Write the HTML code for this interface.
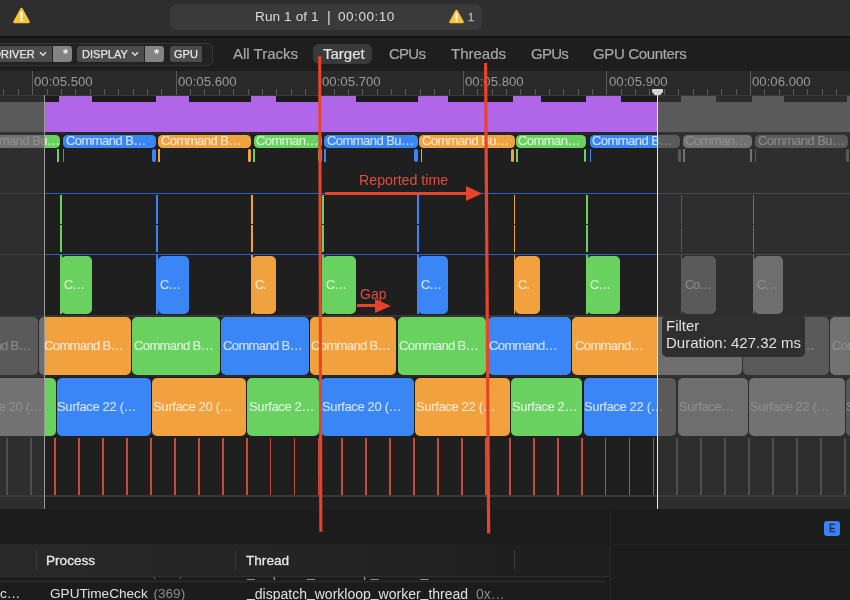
<!DOCTYPE html><html><head><meta charset="utf-8"><style>
*{margin:0;padding:0;box-sizing:border-box}
html,body{width:850px;height:600px;overflow:hidden;background:#1c1c1c;font-family:"Liberation Sans",sans-serif}
div,span,svg{position:absolute}
span{position:static}
.t{white-space:pre;line-height:1;will-change:transform}
.blk{overflow:hidden}
.blk .t{color:rgba(255,255,255,0.72);-webkit-text-stroke:0.2px rgba(255,255,255,0.5)}
</style></head><body><div style="left:0px;top:0px;width:850.00px;height:36.00px;background:#2e2e2e;"></div>
<div style="left:0px;top:36px;width:850.00px;height:2.00px;background:#121212;"></div>
<svg style="left:13px;top:7px" width="17" height="17" viewBox="0 0 16 16"><path d="M8 2 L14.6 14 L1.4 14Z" fill="#f4c43b" stroke="#f4c43b" stroke-width="2.4" stroke-linejoin="round"/><path d="M8 5.2 L8 9.8" stroke="#fff" stroke-width="2.1" stroke-linecap="round"/><circle cx="8" cy="12.4" r="1.15" fill="#fff"/></svg>
<div style="left:170px;top:3.5px;width:312px;height:26px;background:#3a3a3a;border-radius:7px"></div>
<div class="t" style="left:255px;top:10.29px;font-size:13.6px;color:#dcdcdc;letter-spacing:0.1px;">Run 1 of 1</div>
<div class="t" style="left:326.8px;top:10.03px;font-size:14.5px;color:#dcdcdc;letter-spacing:0px;">|</div>
<div class="t" style="left:338px;top:10.29px;font-size:13.6px;color:#dcdcdc;letter-spacing:0.5px;">00:00:10</div>
<svg style="left:448.5px;top:8.5px" width="15" height="15" viewBox="0 0 16 16"><path d="M8 2 L14.6 14 L1.4 14Z" fill="#f4c43b" stroke="#f4c43b" stroke-width="2.4" stroke-linejoin="round"/><path d="M8 5.2 L8 9.8" stroke="#fff" stroke-width="2.1" stroke-linecap="round"/><circle cx="8" cy="12.4" r="1.15" fill="#fff"/></svg>
<div class="t" style="left:467.5px;top:12.19px;font-size:11px;color:#b4b4b4;letter-spacing:0px;-webkit-text-stroke:0.3px #b4b4b4">1</div>
<div style="left:0px;top:38px;width:850.00px;height:33.00px;background:#1e1e1e;"></div>
<div style="left:-20px;top:42.8px;width:233px;height:23px;border:1.2px solid #373737;border-radius:6px;background:#222"></div>
<div style="left:-10px;top:46px;width:62px;height:16px;background:#4c4c4c;border-radius:0 0 0 0"></div>
<div class="t" style="left:-7.5px;top:48.69px;font-size:11px;color:#e6e6e6;letter-spacing:0.05px;-webkit-text-stroke:0.25px #e6e6e6">DRIVER</div>
<svg style="left:39px;top:51px" width="8" height="6" viewBox="0 0 8 6"><path d="M1 1.2 L4 4.2 L7 1.2" stroke="#e0e0e0" stroke-width="1.5" fill="none"/></svg>
<div style="left:53px;top:46px;width:19px;height:16px;background:#838383;border-radius:0 3px 3px 0"></div>
<div class="t" style="left:63.0px;top:47.30px;font-size:13px;color:#f4f4f4;letter-spacing:0px;font-weight:bold">*</div>
<div style="left:77px;top:46px;width:67px;height:16px;background:#4c4c4c;border-radius:3px 0 0 3px"></div>
<div class="t" style="left:81.5px;top:48.69px;font-size:11px;color:#e6e6e6;letter-spacing:0.05px;-webkit-text-stroke:0.25px #e6e6e6">DISPLAY</div>
<svg style="left:131px;top:51px" width="8" height="6" viewBox="0 0 8 6"><path d="M1 1.2 L4 4.2 L7 1.2" stroke="#e0e0e0" stroke-width="1.5" fill="none"/></svg>
<div style="left:145px;top:46px;width:19px;height:16px;background:#838383;border-radius:0 3px 3px 0"></div>
<div class="t" style="left:154.0px;top:47.30px;font-size:13px;color:#f4f4f4;letter-spacing:0px;font-weight:bold">*</div>
<div style="left:170px;top:46px;width:32px;height:16px;background:#4c4c4c;border-radius:3px 0 0 3px"></div>
<div class="t" style="left:173.5px;top:48.69px;font-size:11px;color:#e6e6e6;letter-spacing:0.05px;-webkit-text-stroke:0.25px #e6e6e6">GPU</div>
<div style="left:313px;top:44px;width:59px;height:20px;background:#3a3a3a;border-radius:6px"></div>
<div class="t" style="left:232.6px;top:46.00px;font-size:15px;color:#a8a8a8;letter-spacing:0px;-webkit-text-stroke:0.2px #a8a8a8">All Tracks</div>
<div class="t" style="left:322.6px;top:46.00px;font-size:15px;color:#e2e2e2;letter-spacing:0px;-webkit-text-stroke:0.2px #e2e2e2">Target</div>
<div class="t" style="left:388.6px;top:46.00px;font-size:15px;color:#a8a8a8;letter-spacing:-0.75px;-webkit-text-stroke:0.2px #a8a8a8">CPUs</div>
<div class="t" style="left:450.6px;top:46.00px;font-size:15px;color:#a8a8a8;letter-spacing:0px;-webkit-text-stroke:0.2px #a8a8a8">Threads</div>
<div class="t" style="left:530.6px;top:46.00px;font-size:15px;color:#a8a8a8;letter-spacing:-0.75px;-webkit-text-stroke:0.2px #a8a8a8">GPUs</div>
<div class="t" style="left:592.6px;top:46.00px;font-size:15px;color:#a8a8a8;letter-spacing:-0.35px;-webkit-text-stroke:0.2px #a8a8a8">GPU Counters</div>
<div style="left:0px;top:71px;width:850.00px;height:24.00px;background:#2a2a2a;"></div>
<div style="left:0px;top:95px;width:850.00px;height:1.00px;background:#3a3a3a;"></div>
<div style="left:3.49px;top:89px;width:1.00px;height:6.00px;background:#5a5a5a;"></div>
<div style="left:17.85px;top:89px;width:1.00px;height:6.00px;background:#5a5a5a;"></div>
<div style="left:32.2px;top:71px;width:1.00px;height:24.00px;background:#5a5a5a;"></div>
<div style="left:46.56px;top:89px;width:1.00px;height:6.00px;background:#5a5a5a;"></div>
<div style="left:60.91px;top:89px;width:1.00px;height:6.00px;background:#5a5a5a;"></div>
<div style="left:75.27px;top:89px;width:1.00px;height:6.00px;background:#5a5a5a;"></div>
<div style="left:89.62px;top:89px;width:1.00px;height:6.00px;background:#5a5a5a;"></div>
<div style="left:103.98px;top:89px;width:1.00px;height:6.00px;background:#5a5a5a;"></div>
<div style="left:118.33px;top:89px;width:1.00px;height:6.00px;background:#5a5a5a;"></div>
<div style="left:132.69px;top:89px;width:1.00px;height:6.00px;background:#5a5a5a;"></div>
<div style="left:147.04px;top:89px;width:1.00px;height:6.00px;background:#5a5a5a;"></div>
<div style="left:161.39px;top:89px;width:1.00px;height:6.00px;background:#5a5a5a;"></div>
<div style="left:175.75px;top:71px;width:1.00px;height:24.00px;background:#5a5a5a;"></div>
<div style="left:190.11px;top:89px;width:1.00px;height:6.00px;background:#5a5a5a;"></div>
<div style="left:204.46px;top:89px;width:1.00px;height:6.00px;background:#5a5a5a;"></div>
<div style="left:218.81px;top:89px;width:1.00px;height:6.00px;background:#5a5a5a;"></div>
<div style="left:233.17px;top:89px;width:1.00px;height:6.00px;background:#5a5a5a;"></div>
<div style="left:247.52px;top:89px;width:1.00px;height:6.00px;background:#5a5a5a;"></div>
<div style="left:261.88px;top:89px;width:1.00px;height:6.00px;background:#5a5a5a;"></div>
<div style="left:276.24px;top:89px;width:1.00px;height:6.00px;background:#5a5a5a;"></div>
<div style="left:290.59px;top:89px;width:1.00px;height:6.00px;background:#5a5a5a;"></div>
<div style="left:304.94px;top:89px;width:1.00px;height:6.00px;background:#5a5a5a;"></div>
<div style="left:319.3px;top:71px;width:1.00px;height:24.00px;background:#5a5a5a;"></div>
<div style="left:333.66px;top:89px;width:1.00px;height:6.00px;background:#5a5a5a;"></div>
<div style="left:348.01px;top:89px;width:1.00px;height:6.00px;background:#5a5a5a;"></div>
<div style="left:362.37px;top:89px;width:1.00px;height:6.00px;background:#5a5a5a;"></div>
<div style="left:376.72px;top:89px;width:1.00px;height:6.00px;background:#5a5a5a;"></div>
<div style="left:391.08px;top:89px;width:1.00px;height:6.00px;background:#5a5a5a;"></div>
<div style="left:405.43px;top:89px;width:1.00px;height:6.00px;background:#5a5a5a;"></div>
<div style="left:419.79px;top:89px;width:1.00px;height:6.00px;background:#5a5a5a;"></div>
<div style="left:434.14px;top:89px;width:1.00px;height:6.00px;background:#5a5a5a;"></div>
<div style="left:448.5px;top:89px;width:1.00px;height:6.00px;background:#5a5a5a;"></div>
<div style="left:462.85px;top:71px;width:1.00px;height:24.00px;background:#5a5a5a;"></div>
<div style="left:477.2px;top:89px;width:1.00px;height:6.00px;background:#5a5a5a;"></div>
<div style="left:491.56px;top:89px;width:1.00px;height:6.00px;background:#5a5a5a;"></div>
<div style="left:505.92px;top:89px;width:1.00px;height:6.00px;background:#5a5a5a;"></div>
<div style="left:520.27px;top:89px;width:1.00px;height:6.00px;background:#5a5a5a;"></div>
<div style="left:534.62px;top:89px;width:1.00px;height:6.00px;background:#5a5a5a;"></div>
<div style="left:548.98px;top:89px;width:1.00px;height:6.00px;background:#5a5a5a;"></div>
<div style="left:563.34px;top:89px;width:1.00px;height:6.00px;background:#5a5a5a;"></div>
<div style="left:577.69px;top:89px;width:1.00px;height:6.00px;background:#5a5a5a;"></div>
<div style="left:592.05px;top:89px;width:1.00px;height:6.00px;background:#5a5a5a;"></div>
<div style="left:606.4px;top:71px;width:1.00px;height:24.00px;background:#5a5a5a;"></div>
<div style="left:620.76px;top:89px;width:1.00px;height:6.00px;background:#5a5a5a;"></div>
<div style="left:635.11px;top:89px;width:1.00px;height:6.00px;background:#5a5a5a;"></div>
<div style="left:649.47px;top:89px;width:1.00px;height:6.00px;background:#5a5a5a;"></div>
<div style="left:663.82px;top:89px;width:1.00px;height:6.00px;background:#5a5a5a;"></div>
<div style="left:678.18px;top:89px;width:1.00px;height:6.00px;background:#5a5a5a;"></div>
<div style="left:692.53px;top:89px;width:1.00px;height:6.00px;background:#5a5a5a;"></div>
<div style="left:706.89px;top:89px;width:1.00px;height:6.00px;background:#5a5a5a;"></div>
<div style="left:721.24px;top:89px;width:1.00px;height:6.00px;background:#5a5a5a;"></div>
<div style="left:735.6px;top:89px;width:1.00px;height:6.00px;background:#5a5a5a;"></div>
<div style="left:749.95px;top:71px;width:1.00px;height:24.00px;background:#5a5a5a;"></div>
<div style="left:764.31px;top:89px;width:1.00px;height:6.00px;background:#5a5a5a;"></div>
<div style="left:778.66px;top:89px;width:1.00px;height:6.00px;background:#5a5a5a;"></div>
<div style="left:793.02px;top:89px;width:1.00px;height:6.00px;background:#5a5a5a;"></div>
<div style="left:807.37px;top:89px;width:1.00px;height:6.00px;background:#5a5a5a;"></div>
<div style="left:821.73px;top:89px;width:1.00px;height:6.00px;background:#5a5a5a;"></div>
<div style="left:836.08px;top:89px;width:1.00px;height:6.00px;background:#5a5a5a;"></div>
<div class="t" style="left:34.4px;top:75.13px;font-size:13.2px;color:#9a9a9a;letter-spacing:0px;">00:05.500</div>
<div class="t" style="left:177.95px;top:75.13px;font-size:13.2px;color:#9a9a9a;letter-spacing:0px;">00:05.600</div>
<div class="t" style="left:321.5px;top:75.13px;font-size:13.2px;color:#9a9a9a;letter-spacing:0px;">00:05.700</div>
<div class="t" style="left:465.05px;top:75.13px;font-size:13.2px;color:#9a9a9a;letter-spacing:0px;">00:05.800</div>
<div class="t" style="left:608.6px;top:75.13px;font-size:13.2px;color:#9a9a9a;letter-spacing:0px;">00:05.900</div>
<div class="t" style="left:752.15px;top:75.13px;font-size:13.2px;color:#9a9a9a;letter-spacing:0px;">00:06.000</div>
<div style="left:0px;top:96px;width:850.00px;height:413.00px;background:#1f1f1f;"></div>
<div style="left:0px;top:96px;width:850.00px;height:36.00px;background:#b165e9;"></div>
<div style="left:0px;top:96px;width:59.40px;height:6.00px;background:#1b1b1b;"></div>
<div style="left:91.8px;top:96px;width:64.00px;height:6.00px;background:#1b1b1b;"></div>
<div style="left:189.3px;top:96px;width:61.70px;height:6.00px;background:#1b1b1b;"></div>
<div style="left:276px;top:96px;width:45.00px;height:6.00px;background:#1b1b1b;"></div>
<div style="left:355.8px;top:96px;width:62.20px;height:6.00px;background:#1b1b1b;"></div>
<div style="left:447.8px;top:96px;width:65.20px;height:6.00px;background:#1b1b1b;"></div>
<div style="left:540.6px;top:96px;width:45.10px;height:6.00px;background:#1b1b1b;"></div>
<div style="left:620.6px;top:96px;width:60.10px;height:6.00px;background:#1b1b1b;"></div>
<div style="left:716px;top:96px;width:36.00px;height:6.00px;background:#1b1b1b;"></div>
<div style="left:783.6px;top:96px;width:63.60px;height:6.00px;background:#1b1b1b;"></div>
<div style="left:0px;top:132px;width:850.00px;height:2.50px;background:#262626;"></div>
<div class="blk" style="left:-30px;top:134.5px;width:89.50px;height:13.3px;background:#68d160;border-radius:4.5px">
<div class="t" style="left:2.5px;top:-0.70px;font-size:13px;color:;letter-spacing:-0.55px;">Command Bu…</div>
</div>
<div class="blk" style="left:63.2px;top:134.5px;width:93.10px;height:13.3px;background:#3a86f6;border-radius:4.5px">
<div class="t" style="left:2.5px;top:-0.70px;font-size:13px;color:;letter-spacing:-0.55px;">Command B…</div>
</div>
<div class="blk" style="left:158.3px;top:134.5px;width:93.10px;height:13.3px;background:#f1a13d;border-radius:4.5px">
<div class="t" style="left:2.5px;top:-0.70px;font-size:13px;color:;letter-spacing:-0.55px;">Command B…</div>
</div>
<div class="blk" style="left:253.5px;top:134.5px;width:68.50px;height:13.3px;background:#68d160;border-radius:4.5px">
<div class="t" style="left:2.5px;top:-0.70px;font-size:13px;color:;letter-spacing:-0.55px;">Comman…</div>
</div>
<div class="blk" style="left:324px;top:134.5px;width:93.50px;height:13.3px;background:#3a86f6;border-radius:4.5px">
<div class="t" style="left:2.5px;top:-0.70px;font-size:13px;color:;letter-spacing:-0.55px;">Command Bu…</div>
</div>
<div class="blk" style="left:419px;top:134.5px;width:95.50px;height:13.3px;background:#f1a13d;border-radius:4.5px">
<div class="t" style="left:2.5px;top:-0.70px;font-size:13px;color:;letter-spacing:-0.55px;">Command Bu…</div>
</div>
<div class="blk" style="left:515.8px;top:134.5px;width:70.70px;height:13.3px;background:#68d160;border-radius:4.5px">
<div class="t" style="left:2.5px;top:-0.70px;font-size:13px;color:;letter-spacing:-0.55px;">Comman…</div>
</div>
<div class="blk" style="left:589.8px;top:134.5px;width:90.20px;height:13.3px;background:#3a86f6;border-radius:4.5px">
<div class="t" style="left:2.5px;top:-0.70px;font-size:13px;color:;letter-spacing:-0.55px;">Command B…</div>
</div>
<div class="blk" style="left:682.6px;top:134.5px;width:69.20px;height:13.3px;background:#68d160;border-radius:4.5px">
<div class="t" style="left:2.5px;top:-0.70px;font-size:13px;color:;letter-spacing:-0.55px;">Comman…</div>
</div>
<div class="blk" style="left:755px;top:134.5px;width:93.00px;height:13.3px;background:#3a86f6;border-radius:4.5px">
<div class="t" style="left:2.5px;top:-0.70px;font-size:13px;color:;letter-spacing:-0.55px;">Command Bu…</div>
</div>
<div style="left:57px;top:149px;width:2.00px;height:13.00px;background:#68d160;"></div>
<div style="left:63px;top:149px;width:1.00px;height:13.00px;background:#3a86f6;"></div>
<div style="left:151.5px;top:149px;width:4.50px;height:13.00px;background:#3a86f6;border-radius:2px"></div>
<div style="left:158.1px;top:149px;width:1.80px;height:13.00px;background:#f1a13d;"></div>
<div style="left:247.8px;top:149px;width:3.70px;height:13.00px;background:#f1a13d;border-radius:2px"></div>
<div style="left:253.3px;top:149px;width:1.80px;height:13.00px;background:#68d160;"></div>
<div style="left:318px;top:149px;width:4.00px;height:13.00px;background:#68d160;border-radius:2px"></div>
<div style="left:324.3px;top:149px;width:1.80px;height:13.00px;background:#3a86f6;"></div>
<div style="left:414.3px;top:149px;width:3.30px;height:13.00px;background:#3a86f6;border-radius:2px"></div>
<div style="left:420.5px;top:149px;width:1.80px;height:13.00px;background:#f1a13d;"></div>
<div style="left:511px;top:149px;width:3.00px;height:13.00px;background:#f1a13d;border-radius:2px"></div>
<div style="left:515.8px;top:149px;width:1.80px;height:13.00px;background:#68d160;"></div>
<div style="left:583.8px;top:149px;width:2.70px;height:13.00px;background:#68d160;border-radius:2px"></div>
<div style="left:589.5px;top:149px;width:1.80px;height:13.00px;background:#3a86f6;"></div>
<div style="left:678px;top:149px;width:3.00px;height:13.00px;background:#3a86f6;border-radius:2px"></div>
<div style="left:683.3px;top:149px;width:1.80px;height:13.00px;background:#68d160;"></div>
<div style="left:750.3px;top:149px;width:1.80px;height:13.00px;background:#68d160;"></div>
<div style="left:754.7px;top:149px;width:1.80px;height:13.00px;background:#3a86f6;"></div>
<div style="left:846px;top:149px;width:3.00px;height:13.00px;background:#3a86f6;border-radius:2px"></div>
<div style="left:45px;top:193px;width:805.00px;height:1.30px;background:#2b5fc2;"></div>
<div style="left:0px;top:193px;width:45.00px;height:1.00px;background:#4a4a4a;"></div>
<div style="left:45px;top:254px;width:805.00px;height:1.30px;background:#2b5fc2;"></div>
<div style="left:0px;top:254px;width:45.00px;height:1.00px;background:#4a4a4a;"></div>
<div style="left:59.5px;top:195px;width:2.00px;height:29.00px;background:#68d160;"></div>
<div style="left:59.5px;top:225.3px;width:2.00px;height:27.00px;background:#68d160;"></div>
<div style="left:59.5px;top:255.3px;width:2.00px;height:58.70px;background:#68d160;"></div>
<div class="blk" style="left:60.90px;top:255.6px;width:31.00px;height:58.4px;background:#68d160;border-radius:5px">
<div class="t" style="left:2.8px;top:23.03px;font-size:12.6px;color:;letter-spacing:-0.9px;">C…</div>
</div>
<div style="left:156.2px;top:195px;width:2.00px;height:29.00px;background:#3a86f6;"></div>
<div style="left:156.2px;top:225.3px;width:2.00px;height:27.00px;background:#3a86f6;"></div>
<div style="left:156.2px;top:255.3px;width:2.00px;height:58.70px;background:#3a86f6;"></div>
<div class="blk" style="left:157.60px;top:255.6px;width:31.70px;height:58.4px;background:#3a86f6;border-radius:5px">
<div class="t" style="left:2.8px;top:23.03px;font-size:12.6px;color:;letter-spacing:-0.9px;">C…</div>
</div>
<div style="left:251.3px;top:195px;width:1.30px;height:29.00px;background:#f1a13d;"></div>
<div style="left:251.3px;top:225.3px;width:1.30px;height:27.00px;background:#f1a13d;"></div>
<div style="left:251.3px;top:255.3px;width:1.30px;height:58.70px;background:#f1a13d;"></div>
<div class="blk" style="left:252.21px;top:255.6px;width:23.59px;height:58.4px;background:#f1a13d;border-radius:5px">
<div class="t" style="left:3.29px;top:23.03px;font-size:12.6px;color:;letter-spacing:-0.9px;">C.</div>
</div>
<div style="left:321.5px;top:195px;width:2.00px;height:29.00px;background:#68d160;"></div>
<div style="left:321.5px;top:225.3px;width:2.00px;height:27.00px;background:#68d160;"></div>
<div style="left:321.5px;top:255.3px;width:2.00px;height:58.70px;background:#68d160;"></div>
<div class="blk" style="left:322.90px;top:255.6px;width:33.10px;height:58.4px;background:#68d160;border-radius:5px">
<div class="t" style="left:2.8px;top:23.03px;font-size:12.6px;color:;letter-spacing:-0.9px;">C…</div>
</div>
<div style="left:417.2px;top:195px;width:1.80px;height:29.00px;background:#3a86f6;"></div>
<div style="left:417.2px;top:225.3px;width:1.80px;height:27.00px;background:#3a86f6;"></div>
<div style="left:417.2px;top:255.3px;width:1.80px;height:58.70px;background:#3a86f6;"></div>
<div class="blk" style="left:418.46px;top:255.6px;width:29.34px;height:58.4px;background:#3a86f6;border-radius:5px">
<div class="t" style="left:2.94px;top:23.03px;font-size:12.6px;color:;letter-spacing:-0.9px;">C…</div>
</div>
<div style="left:513.5px;top:195px;width:1.60px;height:29.00px;background:#f1a13d;"></div>
<div style="left:513.5px;top:225.3px;width:1.60px;height:27.00px;background:#f1a13d;"></div>
<div style="left:513.5px;top:255.3px;width:1.60px;height:58.70px;background:#f1a13d;"></div>
<div class="blk" style="left:514.62px;top:255.6px;width:25.88px;height:58.4px;background:#f1a13d;border-radius:5px">
<div class="t" style="left:3.08px;top:23.03px;font-size:12.6px;color:;letter-spacing:-0.9px;">C.</div>
</div>
<div style="left:586px;top:195px;width:2.00px;height:29.00px;background:#68d160;"></div>
<div style="left:586px;top:225.3px;width:2.00px;height:27.00px;background:#68d160;"></div>
<div style="left:586px;top:255.3px;width:2.00px;height:58.70px;background:#68d160;"></div>
<div class="blk" style="left:587.40px;top:255.6px;width:32.60px;height:58.4px;background:#68d160;border-radius:5px">
<div class="t" style="left:2.8px;top:23.03px;font-size:12.6px;color:;letter-spacing:-0.9px;">C…</div>
</div>
<div style="left:680.5px;top:195px;width:1.50px;height:29.00px;background:#3a86f6;"></div>
<div style="left:680.5px;top:225.3px;width:1.50px;height:27.00px;background:#3a86f6;"></div>
<div style="left:680.5px;top:255.3px;width:1.50px;height:58.70px;background:#3a86f6;"></div>
<div class="blk" style="left:681.55px;top:255.6px;width:34.15px;height:58.4px;background:#3a86f6;border-radius:5px">
<div class="t" style="left:3.15px;top:23.03px;font-size:12.6px;color:;letter-spacing:-0.9px;">Co…</div>
</div>
<div style="left:752.5px;top:195px;width:1.50px;height:29.00px;background:#f1a13d;"></div>
<div style="left:752.5px;top:225.3px;width:1.50px;height:27.00px;background:#f1a13d;"></div>
<div style="left:752.5px;top:255.3px;width:1.50px;height:58.70px;background:#f1a13d;"></div>
<div class="blk" style="left:753.55px;top:255.6px;width:29.65px;height:58.4px;background:#f1a13d;border-radius:5px">
<div class="t" style="left:3.15px;top:23.03px;font-size:12.6px;color:;letter-spacing:-0.9px;">C…</div>
</div>
<div style="left:0px;top:314.5px;width:850.00px;height:2.00px;background:#363636;"></div>
<div class="blk" style="left:-50px;top:316.8px;width:88.10px;height:58.2px;background:#3a86f6;border-radius:5px">
<div class="t" style="left:2.2px;top:22.20px;font-size:13px;color:;letter-spacing:-0.62px;">Command B…</div>
</div>
<div class="blk" style="left:38.6px;top:316.8px;width:92.00px;height:58.2px;background:#f1a13d;border-radius:5px">
<div class="t" style="left:5.1px;top:22.20px;font-size:13px;color:;letter-spacing:-0.62px;">Command B…</div>
</div>
<div class="blk" style="left:131.7px;top:316.8px;width:87.90px;height:58.2px;background:#68d160;border-radius:5px">
<div class="t" style="left:2.3px;top:22.20px;font-size:13px;color:;letter-spacing:-0.62px;">Command B…</div>
</div>
<div class="blk" style="left:221px;top:316.8px;width:87.70px;height:58.2px;background:#3a86f6;border-radius:5px">
<div class="t" style="left:2.3px;top:22.20px;font-size:13px;color:;letter-spacing:-0.62px;">Command B…</div>
</div>
<div class="blk" style="left:310.1px;top:316.8px;width:85.80px;height:58.2px;background:#f1a13d;border-radius:5px">
<div class="t" style="left:1.0px;top:22.20px;font-size:13px;color:;letter-spacing:-0.62px;">Command B…</div>
</div>
<div class="blk" style="left:397.7px;top:316.8px;width:88.20px;height:58.2px;background:#68d160;border-radius:5px">
<div class="t" style="left:1.6px;top:22.20px;font-size:13px;color:;letter-spacing:-0.62px;">Command B…</div>
</div>
<div class="blk" style="left:487.7px;top:316.8px;width:82.90px;height:58.2px;background:#3a86f6;border-radius:5px">
<div class="t" style="left:0.9px;top:22.20px;font-size:13px;color:;letter-spacing:-0.62px;">Command…</div>
</div>
<div class="blk" style="left:572px;top:316.8px;width:170.40px;height:58.2px;background:#f1a13d;border-radius:5px">
<div class="t" style="left:2.6px;top:22.20px;font-size:13px;color:;letter-spacing:-0.62px;">Command…</div>
</div>
<div class="blk" style="left:743.4px;top:316.8px;width:85.50px;height:58.2px;background:#3a86f6;border-radius:5px">
<div class="t" style="left:2.3px;top:22.20px;font-size:13px;color:;letter-spacing:-0.62px;">Command…</div>
</div>
<div class="blk" style="left:830px;top:316.8px;width:70.00px;height:58.2px;background:#68d160;border-radius:5px">
<div class="t" style="left:1.6px;top:22.20px;font-size:13px;color:;letter-spacing:-0.62px;">Command B…</div>
</div>
<div style="left:0px;top:375px;width:850.00px;height:2.00px;background:#2a2a2a;"></div>
<div class="blk" style="left:-50px;top:377.8px;width:105.70px;height:58px;background:#68d160;border-radius:5px">
<div class="t" style="left:13.2px;top:22.20px;font-size:13px;color:;letter-spacing:-0.35px;">Surface 20 (…</div>
</div>
<div class="blk" style="left:56.6px;top:377.8px;width:94.40px;height:58px;background:#3a86f6;border-radius:5px">
<div class="t" style="left:0.8px;top:22.20px;font-size:13px;color:;letter-spacing:-0.35px;">Surface 22 (…</div>
</div>
<div class="blk" style="left:151.8px;top:377.8px;width:94.20px;height:58px;background:#f1a13d;border-radius:5px">
<div class="t" style="left:1.7px;top:22.20px;font-size:13px;color:;letter-spacing:-0.35px;">Surface 20 (…</div>
</div>
<div class="blk" style="left:247px;top:377.8px;width:71.90px;height:58px;background:#68d160;border-radius:5px">
<div class="t" style="left:1.8px;top:22.20px;font-size:13px;color:;letter-spacing:-0.35px;">Surface 2…</div>
</div>
<div class="blk" style="left:321px;top:377.8px;width:93.20px;height:58px;background:#3a86f6;border-radius:5px">
<div class="t" style="left:0.7px;top:22.20px;font-size:13px;color:;letter-spacing:-0.35px;">Surface 20 (…</div>
</div>
<div class="blk" style="left:415.3px;top:377.8px;width:94.30px;height:58px;background:#f1a13d;border-radius:5px">
<div class="t" style="left:0.9px;top:22.20px;font-size:13px;color:;letter-spacing:-0.35px;">Surface 22 (…</div>
</div>
<div class="blk" style="left:510.6px;top:377.8px;width:71.70px;height:58px;background:#68d160;border-radius:5px">
<div class="t" style="left:1.0px;top:22.20px;font-size:13px;color:;letter-spacing:-0.35px;">Surface 2…</div>
</div>
<div class="blk" style="left:583.7px;top:377.8px;width:92.70px;height:58px;background:#3a86f6;border-radius:5px">
<div class="t" style="left:0.1px;top:22.20px;font-size:13px;color:;letter-spacing:-0.35px;">Surface 22 (…</div>
</div>
<div class="blk" style="left:677.8px;top:377.8px;width:70.60px;height:58px;background:#f1a13d;border-radius:5px">
<div class="t" style="left:1.3px;top:22.20px;font-size:13px;color:;letter-spacing:-0.35px;">Surface…</div>
</div>
<div class="blk" style="left:749.4px;top:377.8px;width:95.30px;height:58px;background:#68d160;border-radius:5px">
<div class="t" style="left:1.0px;top:22.20px;font-size:13px;color:;letter-spacing:-0.35px;">Surface 22 (…</div>
</div>
<div class="blk" style="left:846px;top:377.8px;width:74.00px;height:58px;background:#3a86f6;border-radius:5px">
<div class="t" style="left:-0.3px;top:22.20px;font-size:13px;color:;letter-spacing:-0.35px;">Surface</div>
</div>
<div style="left:6.44px;top:438px;width:1.80px;height:57.00px;background:#c94a3b;"></div>
<div style="left:30.37px;top:438px;width:1.80px;height:57.00px;background:#c94a3b;"></div>
<div style="left:54.3px;top:438px;width:1.80px;height:57.00px;background:#c94a3b;"></div>
<div style="left:78.23px;top:438px;width:1.80px;height:57.00px;background:#c94a3b;"></div>
<div style="left:102.16px;top:438px;width:1.80px;height:57.00px;background:#c94a3b;"></div>
<div style="left:126.09px;top:438px;width:1.80px;height:57.00px;background:#c94a3b;"></div>
<div style="left:150.02px;top:438px;width:1.80px;height:57.00px;background:#c94a3b;"></div>
<div style="left:173.95px;top:438px;width:1.80px;height:57.00px;background:#c94a3b;"></div>
<div style="left:197.88px;top:438px;width:1.80px;height:57.00px;background:#c94a3b;"></div>
<div style="left:221.81px;top:438px;width:1.80px;height:57.00px;background:#c94a3b;"></div>
<div style="left:245.74px;top:438px;width:1.80px;height:57.00px;background:#c94a3b;"></div>
<div style="left:269.67px;top:438px;width:1.80px;height:57.00px;background:#c94a3b;"></div>
<div style="left:293.6px;top:438px;width:1.80px;height:57.00px;background:#c94a3b;"></div>
<div style="left:317.53px;top:438px;width:1.80px;height:57.00px;background:#c94a3b;"></div>
<div style="left:341.46px;top:438px;width:1.80px;height:57.00px;background:#c94a3b;"></div>
<div style="left:365.39px;top:438px;width:1.80px;height:57.00px;background:#c94a3b;"></div>
<div style="left:389.32px;top:438px;width:1.80px;height:57.00px;background:#c94a3b;"></div>
<div style="left:413.25px;top:438px;width:1.80px;height:57.00px;background:#c94a3b;"></div>
<div style="left:437.18px;top:438px;width:1.80px;height:57.00px;background:#c94a3b;"></div>
<div style="left:461.11px;top:438px;width:1.80px;height:57.00px;background:#c94a3b;"></div>
<div style="left:485.04px;top:438px;width:1.80px;height:57.00px;background:#c94a3b;"></div>
<div style="left:508.97px;top:438px;width:1.80px;height:57.00px;background:#c94a3b;"></div>
<div style="left:532.9px;top:438px;width:1.80px;height:57.00px;background:#c94a3b;"></div>
<div style="left:556.83px;top:438px;width:1.80px;height:57.00px;background:#c94a3b;"></div>
<div style="left:580.76px;top:438px;width:1.80px;height:57.00px;background:#c94a3b;"></div>
<div style="left:604.69px;top:438px;width:1.80px;height:57.00px;background:#c94a3b;"></div>
<div style="left:628.62px;top:438px;width:1.80px;height:57.00px;background:#c94a3b;"></div>
<div style="left:652.55px;top:438px;width:1.80px;height:57.00px;background:#c94a3b;"></div>
<div style="left:676.48px;top:438px;width:1.80px;height:57.00px;background:#c94a3b;"></div>
<div style="left:700.41px;top:438px;width:1.80px;height:57.00px;background:#c94a3b;"></div>
<div style="left:724.34px;top:438px;width:1.80px;height:57.00px;background:#c94a3b;"></div>
<div style="left:748.27px;top:438px;width:1.80px;height:57.00px;background:#c94a3b;"></div>
<div style="left:772.2px;top:438px;width:1.80px;height:57.00px;background:#c94a3b;"></div>
<div style="left:796.13px;top:438px;width:1.80px;height:57.00px;background:#c94a3b;"></div>
<div style="left:820.06px;top:438px;width:1.80px;height:57.00px;background:#c94a3b;"></div>
<div style="left:843.99px;top:438px;width:1.80px;height:57.00px;background:#c94a3b;"></div>
<div style="left:0px;top:495px;width:850.00px;height:1.80px;background:#3a3a3a;"></div>
<div style="left:0;top:96px;width:44.5px;height:413px;backdrop-filter:grayscale(1);background:rgba(60,60,60,0.54)"></div>
<div style="left:657.5px;top:96px;width:200px;height:413px;backdrop-filter:grayscale(1);background:rgba(60,60,60,0.54)"></div>
<div style="left:44px;top:95px;width:1.00px;height:414.00px;background:#9a9a9a;"></div>
<div style="left:656.5px;top:95px;width:1.30px;height:414.00px;background:#e8e8e8;"></div>
<svg style="left:652px;top:89px" width="11" height="7" viewBox="0 0 11 7"><path d="M1 0 H10 Q11 0 11 1 V3 L8 6.3 H3 L0 3 V1 Q0 0 1 0Z" fill="#d4d4d4"/></svg>
<div style="left:662px;top:315px;width:143px;height:41.5px;background:#2f2f2f;border-radius:5px"></div>
<div class="t" style="left:666px;top:317.90px;font-size:15px;color:#e0e0e0;letter-spacing:0px;">Filter</div>
<div class="t" style="left:666px;top:334.90px;font-size:15px;color:#e0e0e0;letter-spacing:0px;">Duration: 427.32 ms</div>
<div style="left:0px;top:509px;width:850.00px;height:91.00px;background:#1c1c1c;"></div>
<div style="left:0px;top:544px;width:610.00px;height:32.00px;background:linear-gradient(90deg,#292929,#242424 50%,#1f1f1f 85%);"></div>
<div style="left:0px;top:576px;width:610.00px;height:1.00px;background:#303030;"></div>
<div style="left:610px;top:509px;width:1.00px;height:91.00px;background:#232323;"></div>
<div style="left:611px;top:544px;width:239.00px;height:1.00px;background:#232323;"></div>
<div style="left:36px;top:550.5px;width:1.00px;height:19.50px;background:#3c3c3c;"></div>
<div style="left:235px;top:550.5px;width:1.00px;height:19.50px;background:#3c3c3c;"></div>
<div style="left:514px;top:550.5px;width:1.00px;height:19.50px;background:#3c3c3c;"></div>
<div class="t" style="left:46.3px;top:554.29px;font-size:13.6px;color:#e8e8e8;letter-spacing:0px;-webkit-text-stroke:0.3px #e8e8e8">Process</div>
<div class="t" style="left:245.5px;top:554.29px;font-size:13.6px;color:#e8e8e8;letter-spacing:0px;-webkit-text-stroke:0.3px #e8e8e8">Thread</div>
<div class="t" style="left:0px;top:587.19px;font-size:13.6px;color:#e0e0e0;letter-spacing:0px;">c…</div>
<div class="t" style="left:50px;top:587.19px;font-size:13.6px;color:#e0e0e0;letter-spacing:0px;">GPUTimeCheck <span style="color:#8a8a8a;margin-left:2px">(369)</span></div>
<div class="t" style="left:247px;top:586.85px;font-size:14px;color:#e0e0e0;letter-spacing:0px;"><span style="position:relative;top:-2px">_</span>dispatch<span style="position:relative;top:-2px">_</span>workloop<span style="position:relative;top:-2px">_</span>worker<span style="position:relative;top:-2px">_</span>thread  <span style="color:#8a8a8a">0x…</span></div>
<div style="left:0;top:576.5px;width:610px;height:4.5px;overflow:hidden">
<div class="t" style="left:50px;top:-11.51px;font-size:13.6px;color:#9a9a9a;letter-spacing:0px;">GPUTimeCheck <span style="color:#6a6a6a">(369)</span></div>
<div class="t" style="left:247px;top:-11.85px;font-size:14px;color:#9a9a9a;letter-spacing:0px;">_dispatch_workloop_worker_thread <span style="color:#6a6a6a">0x…</span></div>
</div>
<div style="left:0px;top:581px;width:605.00px;height:1.00px;background:#2e2e2e;"></div>
<div style="left:824.3px;top:520.8px;width:15.7px;height:15.4px;background:#3a80f6;border-radius:3px"></div>
<div class="t" style="left:828.6px;top:522.81px;font-size:11.8px;color:#1e2a3a;letter-spacing:0px;-webkit-text-stroke:0.45px #1e2a3a;transform:scaleX(0.8);transform-origin:0 0">E</div>
<svg style="left:0;top:0" width="850" height="600"><line x1="319.7" y1="56.2" x2="320.85" y2="531.8" stroke="#e9442a" stroke-width="3.1"/><line x1="485.6" y1="63" x2="488.65" y2="533.6" stroke="#e9442a" stroke-width="3.2"/></svg>
<div class="t" style="left:358.5px;top:172.58px;font-size:14.2px;color:#dd4f3f;letter-spacing:0px;">Reported time</div>
<div style="left:325px;top:192.3px;width:143.00px;height:3.00px;background:#e5432c;"></div>
<svg style="left:466px;top:186px" width="16" height="15" viewBox="0 0 16 15"><path d="M0 0 L16 7.5 L0 15Z" fill="#e5432c"/></svg>
<div class="t" style="left:360px;top:286.65px;font-size:14px;color:#dd4f3f;letter-spacing:0px;">Gap</div>
<div style="left:356.8px;top:304.2px;width:19.20px;height:3.00px;background:#e5432c;"></div>
<svg style="left:375px;top:299px" width="16" height="14" viewBox="0 0 16 14"><path d="M0 0 L16 7 L0 14Z" fill="#e5432c"/></svg></body></html>
